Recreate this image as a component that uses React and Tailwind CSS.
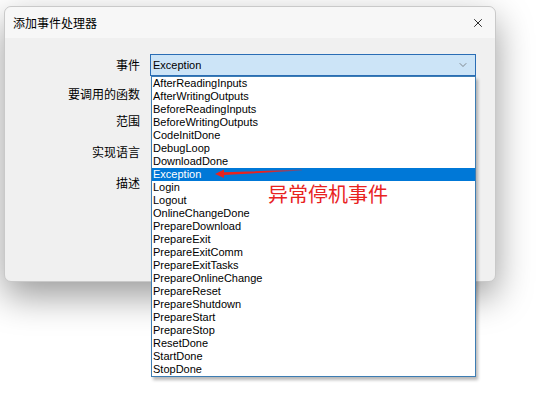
import { ChevronDown, X } from 'lucide-react'

const EVENTS = [
  'AfterReadingInputs',
  'AfterWritingOutputs',
  'BeforeReadingInputs',
  'BeforeWritingOutputs',
  'CodeInitDone',
  'DebugLoop',
  'DownloadDone',
  'Exception',
  'Login',
  'Logout',
  'OnlineChangeDone',
  'PrepareDownload',
  'PrepareExit',
  'PrepareExitComm',
  'PrepareExitTasks',
  'PrepareOnlineChange',
  'PrepareReset',
  'PrepareShutdown',
  'PrepareStart',
  'PrepareStop',
  'ResetDone',
  'StartDone',
  'StopDone',
]

const cjk = "font-['Noto_Sans_CJK_SC','Noto_Sans',sans-serif]"
const ui = "font-['Liberation_Sans',Arial,sans-serif]"

function Label({ children, h }) {
  return (
    <div className={`${h} flex items-center justify-end text-[12px] text-black ${cjk}`}>
      {children}
    </div>
  )
}

export default function App() {
  const selected = 'Exception'

  return (
    <div className="relative w-[541px] h-[410px] bg-white overflow-hidden pl-[4px] pt-[6px]">
      {/* dialog */}
      <div className="w-[492px] h-[276px] rounded-[7px] border border-[#c9c9c9] bg-[#f0f0f0] shadow-[0_14px_36px_rgba(0,0,0,0.4)] flex flex-col overflow-visible">
        <div className="h-[31px] shrink-0 rounded-t-[7px] bg-[#f7f7f7] flex items-center justify-between pl-[8px] pr-[10px]">
          <span className={`text-[12px] text-black ${cjk}`}>添加事件处理器</span>
          <X size={14} strokeWidth={1.4} className="text-black" />
        </div>

        <div className="grid grid-cols-[135px_1fr] gap-x-[10px] pt-[16px] pr-[19px]">
          <Label h="h-[22px]">事件</Label>
          <div className="relative h-[22px]">
            <div className={`h-full flex items-center justify-between border border-[#2a6db5] bg-[#cce4f7] pl-[2px] pr-[6px] text-[11px] text-black ${ui}`}>
              <span>{selected}</span>
              <ChevronDown size={12} strokeWidth={1.3} className="text-[#555]" />
            </div>

            {/* open dropdown list */}
            <div className="absolute z-10 top-full left-[1px] right-0 border border-[#3d7db3] bg-white shadow-[2px_3px_3px_rgba(0,0,0,0.28)]">
              {EVENTS.map((ev) => (
                <div
                  key={ev}
                  className={`h-[13px] leading-[13px] pl-[1px] text-[11px] whitespace-nowrap ${ui} ${
                    ev === selected ? 'bg-[#0078d7] text-white' : 'text-black'
                  }`}
                >
                  {ev}
                </div>
              ))}
            </div>
          </div>

          <Label h="h-[35px]">要调用的函数</Label>
          <div />
          <Label h="h-[20px]">范围</Label>
          <div />
          <Label h="h-[42px]">实现语言</Label>
          <div />
          <Label h="h-[20px]">描述</Label>
          <div />
        </div>
      </div>

      {/* annotation */}
      <svg className="absolute z-20 left-[212px] top-[164px]" width="92" height="16" viewBox="0 0 92 16">
        <defs>
          <linearGradient id="tail" x1="0" x2="1" y1="0" y2="0">
            <stop offset="0" stopColor="#e8231f" />
            <stop offset="0.6" stopColor="#e8231f" />
            <stop offset="1" stopColor="#e8231f" stopOpacity="0.35" />
          </linearGradient>
        </defs>
        <path d="M3 10 L12 5.5 L12 8.2 L90 5.6 L90 6.6 L12 11 L12 14 Z" fill="url(#tail)" />
      </svg>
      <div className={`absolute z-20 left-[268px] top-[181px] text-[20px] leading-[26px] text-[#e8231f] ${cjk}`}>
        异常停机事件
      </div>
    </div>
  )
}
